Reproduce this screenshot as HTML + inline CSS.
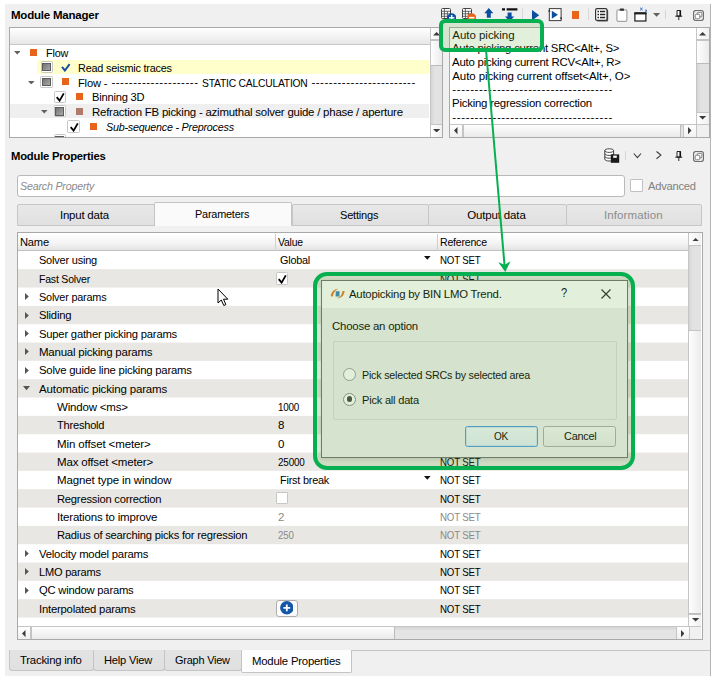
<!DOCTYPE html>
<html><head><meta charset="utf-8"><title>Module Manager</title>
<style>
html,body{margin:0;padding:0;background:#fff;}
#root{position:relative;width:717px;height:681px;overflow:hidden;background:#fff;font-family:'Liberation Sans', sans-serif;}
#root div,#root span,#root svg{position:absolute;box-sizing:border-box;}
#root span{white-space:pre;line-height:14px;}
</style></head><body><div id="root">
<div style="left:5px;top:4px;width:706px;height:672px;background:#f0f0f0;"></div>
<div style="left:710px;top:4px;width:1px;height:672px;background:#b4b4b4;"></div>
<span style="left:11px;top:8.09px;font-size:11.5px;font-weight:bold;color:#000;letter-spacing:-0.210px;transform:scaleX(1.0000);transform-origin:0 50%;">Module Manager</span>
<svg style="left:441px;top:7.5px;" width="10" height="11" viewBox="0 0 10 11"><rect x="0.5" y="0.5" width="9" height="10" rx="1" fill="#fff" stroke="#444" stroke-width="1"/><path d="M0.5 3.3H9.5M0.5 5.8H9.5M0.5 8.3H9.5M3.4 0.5V10.5M6.4 3.3V10.5" stroke="#444" stroke-width="0.8"/></svg>
<svg style="left:446.8px;top:12.6px;" width="9.4" height="9.4" viewBox="0 0 9.4 9.4"><circle cx="4.7" cy="4.7" r="4.5" fill="#0b4ea0"/><path d="M4.7 2V7.4M2 4.7H7.4" stroke="#fff" stroke-width="1.5"/></svg>
<svg style="left:462px;top:7.5px;" width="10" height="11" viewBox="0 0 10 11"><rect x="0.5" y="0.5" width="9" height="10" rx="1" fill="#fff" stroke="#444" stroke-width="1"/><path d="M0.5 3.3H9.5M0.5 5.8H9.5M0.5 8.3H9.5M3.4 0.5V10.5M6.4 3.3V10.5" stroke="#444" stroke-width="0.8"/></svg>
<svg style="left:466.9px;top:12.6px;" width="9.4" height="9.4" viewBox="0 0 9.4 9.4"><circle cx="4.7" cy="4.7" r="4.5" fill="#e8641b"/><path d="M2 4.7H7.4" stroke="#fff" stroke-width="1.6"/></svg>
<svg style="left:484.1px;top:7.8px;" width="10" height="10" viewBox="0 0 10 10"><path d="M4.8 0L9.3 5.2H6.8V9.8H2.8V5.2H0.3Z" fill="#0b4ea0"/></svg>
<svg style="left:502px;top:7.6px;" width="16" height="14" viewBox="0 0 16 14"><path d="M0 0.2H3V2.4H0ZM4.6 0.2H15.4V2.4H4.6Z" fill="#111"/><path d="M5.6 4.4H9.6V8.6H12.2L7.6 13.6L3 8.6H5.6Z" fill="#0b4ea0"/></svg>
<div style="left:522.3px;top:8px;width:1px;height:12px;background:#d9d9d9;"></div>
<svg style="left:532px;top:9.5px;" width="7.5" height="10.4" viewBox="0 0 7.5 10.4"><path d="M0 0L7.2 5.2L0 10.4Z" fill="#0b4ea0"/></svg>
<svg style="left:547.9px;top:8px;" width="14.5" height="13.5" viewBox="0 0 14.5 13.5"><rect x="1.3" y="0.6" width="11.8" height="12" fill="#fff" stroke="#3c3c3c" stroke-width="1"/><path d="M0 3.6L1.3 1.6L2.6 3.6Z M11.8 9.6L13.1 11.6L14.4 9.6Z" fill="#222"/><path d="M3.8 2.8L9.9 6.8L3.8 10.8Z" fill="#0b4ea0"/></svg>
<div style="left:571.6px;top:11.3px;width:7.5px;height:7.5px;background:#e8641b;"></div>
<div style="left:588px;top:8px;width:1px;height:12px;background:#d9d9d9;"></div>
<svg style="left:594.5px;top:8px;" width="14" height="14" viewBox="0 0 14 14"><rect x="1.6" y="1.6" width="11.6" height="12" rx="1.5" fill="#555"/><rect x="0.6" y="0.6" width="11.4" height="11.8" rx="1.5" fill="#fff" stroke="#333" stroke-width="1.2"/><path d="M2.5 3.4H4M5 3.4H10.2M2.5 6.4H4M5 6.4H10.2M2.5 9.4H4M5 9.4H10.2" stroke="#222" stroke-width="1.5"/></svg>
<svg style="left:615.5px;top:7.6px;" width="12" height="14" viewBox="0 0 12 14"><rect x="0.9" y="1.9" width="10" height="11.4" rx="1.3" fill="#fff" stroke="#a4a4a4" stroke-width="1.2"/><rect x="3.8" y="0.4" width="4.2" height="2.4" rx="0.6" fill="#333"/></svg>
<svg style="left:633.5px;top:7px;" width="14" height="15" viewBox="0 0 14 15"><rect x="0.9" y="6.4" width="11" height="7.6" fill="#fff" stroke="#1c1c1c" stroke-width="1.2"/><rect x="0.3" y="5.2" width="12.2" height="2.2" fill="#1c1c1c"/><path d="M6.2 0.8L8.6 3.2M8.6 0.8L6.2 3.2M11.2 2.8L13 4.6M13 2.8L11.2 4.6" stroke="#2a63c8" stroke-width="1"/></svg>
<svg style="left:653.4px;top:13px;" width="7.2" height="3.8" viewBox="0 0 7.2 3.8"><path d="M0 0H7.2L3.6 3.7Z" fill="#606060"/></svg>
<div style="left:665.2px;top:10.4px;width:1px;height:9px;background:#d6d6d6;"></div>
<svg style="left:674.6px;top:10.2px;" width="8" height="10.5" viewBox="0 0 8 10.5"><path d="M2 0.5H5.6V6H2Z" fill="#f4f4f4" stroke="#111" stroke-width="0.9"/><path d="M5.2 0.5V6" stroke="#111" stroke-width="1.5"/><path d="M0.4 6.2H7.2" stroke="#111" stroke-width="1"/><path d="M3.8 6.5V10.1" stroke="#111" stroke-width="0.9"/></svg>
<svg style="left:693.2px;top:10px;" width="11" height="11" viewBox="0 0 11 11"><rect x="0.5" y="0.5" width="10" height="10" rx="2.4" fill="#ececec" stroke="#707070" stroke-width="1.2"/><rect x="4.3" y="2.3" width="4.6" height="4.6" rx="1.2" fill="#f4f4f4" stroke="#7a7a7a" stroke-width="1"/><rect x="2.2" y="4.2" width="4.6" height="4.6" rx="1.4" fill="#fff" stroke="#7a7a7a" stroke-width="1"/></svg>
<div style="left:9px;top:27px;width:434px;height:110.5px;background:#fff;border:1px solid #a9a9a9;"></div>
<div style="left:10px;top:28px;width:420px;height:16.5px;background:linear-gradient(#fff,#f1f1f1 60%,#e6e6e6);border-bottom:1px solid #c8c8c8;"></div>
<div style="left:10px;top:45px;width:420px;height:91.5px;overflow:hidden;">
<div style="left:27px;top:15px;width:392.3px;height:14.2px;background:#ffffcc;"></div>
<div style="left:0px;top:58.60000000000001px;width:419.3px;height:14.6px;background:#efefef;"></div>
<svg style="left:3.7px;top:6.200000000000001px;" width="6.6" height="3.6" viewBox="0 0 6.6 3.6"><path d="M0 0H6.6L3.3 3.5Z" fill="#606060"/></svg>
<div style="left:20px;top:4.000000000000002px;width:7px;height:7px;background:#e8641b;"></div>
<span style="left:36px;top:1.29px;font-size:11.5px;color:#000;letter-spacing:-0.220px;transform:scaleX(0.9441);transform-origin:0 50%;">Flow</span>
<div style="left:30.5px;top:16.000000000000004px;width:12.5px;height:12.3px;background:#fff;border:1px solid #c6c6c6;border-radius:1.5px;"></div>
<div style="left:32.4px;top:17.800000000000004px;width:8.8px;height:8.7px;background:linear-gradient(135deg,#747474,#a8a8a8);border:1px solid #5c5c5c;"></div>
<svg style="left:51px;top:17.700000000000003px;" width="10" height="9" viewBox="0 0 10 9"><path d="M1 3.9L3.9 7.5L8.6 1.2" fill="none" stroke="#1b4f9c" stroke-width="2"/></svg>
<span style="left:68.3px;top:15.89px;font-size:11.5px;color:#000;letter-spacing:-0.220px;transform:scaleX(0.9439);transform-origin:0 50%;">Read seismic traces</span>
<svg style="left:18.099999999999998px;top:35.6px;" width="6.6" height="3.6" viewBox="0 0 6.6 3.6"><path d="M0 0H6.6L3.3 3.5Z" fill="#606060"/></svg>
<div style="left:30.0px;top:30.8px;width:12.5px;height:12.3px;background:#fff;border:1px solid #c6c6c6;border-radius:1.5px;"></div>
<div style="left:31.9px;top:32.6px;width:8.8px;height:8.7px;background:linear-gradient(135deg,#747474,#a8a8a8);border:1px solid #5c5c5c;"></div>
<div style="left:52.3px;top:33.4px;width:7px;height:7px;background:#e8641b;"></div>
<span style="left:68.3px;top:30.69px;font-size:11.5px;color:#000;letter-spacing:-0.220px;transform:scaleX(0.9731);transform-origin:0 50%;">Flow -</span>
<span style="left:101.4px;top:29.89px;font-size:11.5px;color:#000;letter-spacing:0.527px;">--------------------</span>
<span style="left:191.7px;top:30.69px;font-size:11.5px;color:#000;letter-spacing:-0.220px;transform:scaleX(0.8943);transform-origin:0 50%;">STATIC CALCULATION</span>
<span style="left:301.4px;top:29.89px;font-size:11.5px;color:#000;letter-spacing:0.521px;">------------------------</span>
<div style="left:43.5px;top:45.5px;width:12.6px;height:12.3px;background:#fff;border:1px solid #c6c6c6;border-radius:1.5px;"></div>
<svg style="left:45px;top:46.7px;" width="11" height="10" viewBox="0 0 11 10"><path d="M1.7 5.1L4.6 8.6L8.8 1.4" fill="none" stroke="#000" stroke-width="1.8"/></svg>
<div style="left:66px;top:48.1px;width:7px;height:7px;background:#e8641b;"></div>
<span style="left:82.4px;top:45.39px;font-size:11.5px;color:#000;letter-spacing:-0.220px;transform:scaleX(0.9689);transform-origin:0 50%;">Binning 3D</span>
<svg style="left:31.400000000000002px;top:65.0px;" width="6.6" height="3.6" viewBox="0 0 6.6 3.6"><path d="M0 0H6.6L3.3 3.5Z" fill="#606060"/></svg>
<div style="left:43.5px;top:60.2px;width:12.5px;height:12.3px;background:#fff;border:1px solid #c6c6c6;border-radius:1.5px;"></div>
<div style="left:45.4px;top:62.00000000000001px;width:8.8px;height:8.7px;background:linear-gradient(135deg,#747474,#a8a8a8);border:1px solid #5c5c5c;"></div>
<div style="left:66px;top:62.800000000000004px;width:7px;height:7px;background:#b07a68;"></div>
<span style="left:82.4px;top:60.09px;font-size:11.5px;color:#000;letter-spacing:-0.220px;transform:scaleX(0.9930);transform-origin:0 50%;">Refraction FB picking - azimuthal solver guide / phase / aperture</span>
<div style="left:57.3px;top:75.3px;width:12.6px;height:12.3px;background:#fff;border:1px solid #c6c6c6;border-radius:1.5px;"></div>
<svg style="left:58.8px;top:76.5px;" width="11" height="10" viewBox="0 0 11 10"><path d="M1.7 5.1L4.6 8.6L8.8 1.4" fill="none" stroke="#000" stroke-width="1.8"/></svg>
<div style="left:79.7px;top:77.9px;width:7px;height:7px;background:#e8641b;"></div>
<span style="left:96px;top:75.19px;font-size:11.5px;font-style:italic;color:#000;letter-spacing:-0.220px;transform:scaleX(0.9324);transform-origin:0 50%;">Sub-sequence - Preprocess</span>
<div style="left:43.5px;top:89.10000000000001px;width:12.5px;height:12.3px;background:#fff;border:1px solid #c6c6c6;border-radius:1.5px;"></div>
<div style="left:45.4px;top:90.9px;width:8.8px;height:8.7px;background:linear-gradient(135deg,#747474,#a8a8a8);border:1px solid #5c5c5c;"></div>
</div>
<div style="left:430px;top:27.5px;width:12.199999999999989px;height:109.5px;background:linear-gradient(to right,#d4d4d4,#e2e2e2 30%,#e2e2e2);border-left:1px solid #c6c6c6;"></div>
<div style="left:430px;top:27.5px;width:12.199999999999989px;height:12.8px;background:linear-gradient(to right,#fff,#f0f0f0);border-left:1px solid #c6c6c6;border-bottom:1px solid #c4c4c4;"></div>
<svg style="left:432.8px;top:32.0px;" width="7.2" height="3.5" viewBox="0 0 7.2 3.5"><path d="M0 3.5H7.2L3.6 0Z" fill="#3c3c3c"/></svg>
<div style="left:430px;top:124.2px;width:12.199999999999989px;height:12.8px;background:linear-gradient(to right,#fff,#f0f0f0);border-left:1px solid #c6c6c6;border-top:1px solid #c4c4c4;"></div>
<svg style="left:432.8px;top:128.9px;" width="7.2" height="3.5" viewBox="0 0 7.2 3.5"><path d="M0 0H7.2L3.6 3.5Z" fill="#3c3c3c"/></svg>
<div style="left:430px;top:40.3px;width:12.199999999999989px;height:25.700000000000003px;background:linear-gradient(to right,#fefefe,#ebebeb);border-left:1px solid #c6c6c6;border-top:1px solid #c4c4c4;border-bottom:1px solid #bcbcbc;"></div>
<div style="left:449px;top:27px;width:260.5px;height:110.5px;background:#fff;border:1px solid #a9a9a9;"></div>
<span style="left:452.3px;top:27.79px;font-size:11.5px;color:#000;letter-spacing:-0.032px;transform:scaleX(1.0000);transform-origin:0 50%;">Auto picking</span>
<span style="left:452.3px;top:41.49px;font-size:11.5px;color:#000;letter-spacing:-0.220px;transform:scaleX(0.9864);transform-origin:0 50%;">Auto picking current SRC&lt;Alt+, S&gt;</span>
<span style="left:452.3px;top:55.19px;font-size:11.5px;color:#000;letter-spacing:-0.220px;transform:scaleX(0.9922);transform-origin:0 50%;">Auto picking current RCV&lt;Alt+, R&gt;</span>
<span style="left:452.3px;top:68.89px;font-size:11.5px;color:#000;letter-spacing:-0.102px;transform:scaleX(1.0000);transform-origin:0 50%;">Auto picking current offset&lt;Alt+, O&gt;</span>
<span style="left:452.3px;top:82.09px;font-size:11.5px;color:#000;letter-spacing:0.632px;">------------------------------------</span>
<span style="left:452.3px;top:96.29px;font-size:11.5px;color:#000;letter-spacing:-0.220px;transform:scaleX(0.9901);transform-origin:0 50%;">Picking regression correction</span>
<span style="left:452.3px;top:109.79px;font-size:11.5px;color:#000;letter-spacing:0.632px;">------------------------------------</span>
<div style="left:696px;top:27.5px;width:13.299999999999955px;height:96.8px;background:linear-gradient(to right,#d4d4d4,#e2e2e2 30%,#e2e2e2);border-left:1px solid #c6c6c6;"></div>
<div style="left:696px;top:27.5px;width:13.299999999999955px;height:12.8px;background:linear-gradient(to right,#fff,#f0f0f0);border-left:1px solid #c6c6c6;border-bottom:1px solid #c4c4c4;"></div>
<svg style="left:699.3499999999999px;top:32.0px;" width="7.2" height="3.5" viewBox="0 0 7.2 3.5"><path d="M0 3.5H7.2L3.6 0Z" fill="#3c3c3c"/></svg>
<div style="left:696px;top:111.5px;width:13.299999999999955px;height:12.8px;background:linear-gradient(to right,#fff,#f0f0f0);border-left:1px solid #c6c6c6;border-top:1px solid #c4c4c4;"></div>
<svg style="left:699.3499999999999px;top:116.19999999999999px;" width="7.2" height="3.5" viewBox="0 0 7.2 3.5"><path d="M0 0H7.2L3.6 3.5Z" fill="#3c3c3c"/></svg>
<div style="left:696px;top:40.3px;width:13.299999999999955px;height:24.10000000000001px;background:linear-gradient(to right,#fefefe,#ebebeb);border-left:1px solid #c6c6c6;border-top:1px solid #c4c4c4;border-bottom:1px solid #bcbcbc;"></div>
<div style="left:450px;top:124.3px;width:246px;height:12.700000000000003px;background:linear-gradient(#d4d4d4,#e4e4e4 30%,#e4e4e4);border-top:1px solid #c6c6c6;"></div>
<div style="left:450px;top:124.3px;width:13px;height:12.700000000000003px;background:linear-gradient(#fff,#f0f0f0);border-top:1px solid #c6c6c6;border-right:1px solid #c4c4c4;"></div>
<svg style="left:454.3px;top:127.35000000000002px;" width="3.5" height="7.2" viewBox="0 0 3.5 7.2"><path d="M3.5 0V7.2L0 3.6Z" fill="#3c3c3c"/></svg>
<div style="left:683.2px;top:124.3px;width:12.8px;height:12.700000000000003px;background:linear-gradient(#fff,#f0f0f0);border-top:1px solid #c6c6c6;border-left:1px solid #c4c4c4;"></div>
<svg style="left:688.0999999999999px;top:127.35000000000002px;" width="3.5" height="7.2" viewBox="0 0 3.5 7.2"><path d="M0 0V7.2L3.5 3.6Z" fill="#3c3c3c"/></svg>
<div style="left:462.5px;top:124.3px;width:218.5px;height:12.700000000000003px;background:linear-gradient(#fefefe,#e9e9e9);border-top:1px solid #c6c6c6;border-right:1px solid #bcbcbc;border-left:1px solid #c4c4c4;"></div>
<div style="left:696px;top:124.3px;width:13.3px;height:12.7px;background:#f0f0f0;border-left:1px solid #c6c6c6;border-top:1px solid #c6c6c6;"></div>
<span style="left:11.3px;top:149.09px;font-size:11.5px;font-weight:bold;color:#000;letter-spacing:-0.220px;transform:scaleX(0.9793);transform-origin:0 50%;">Module Properties</span>
<svg style="left:604.2px;top:147.6px;" width="16" height="15.5" viewBox="0 0 16 15.5"><path d="M0.8 2.6C0.8 0.2 9.6 0.2 9.6 2.6V11.2C9.6 13.6 0.8 13.6 0.8 11.2Z" fill="#fff" stroke="#444" stroke-width="1"/><path d="M0.8 2.6C0.8 5 9.6 5 9.6 2.6M0.8 5.6C0.8 8 9.6 8 9.6 5.6M0.8 8.4C0.8 10.8 9.6 10.8 9.6 8.4" fill="none" stroke="#444" stroke-width="1"/><rect x="6.8" y="6.4" width="8.4" height="8.4" fill="#1a1a1a"/><rect x="9.2" y="7.6" width="3.6" height="2.2" fill="#fff"/></svg>
<div style="left:625.2px;top:151px;width:1px;height:8.5px;background:#d6d6d6;"></div>
<svg style="left:633.3px;top:153px;" width="9" height="6" viewBox="0 0 9 6"><path d="M0.8 0.5L4.4 4.6L8 0.5" fill="none" stroke="#3c3c3c" stroke-width="1.1"/></svg>
<svg style="left:655.7px;top:151.4px;" width="6" height="9" viewBox="0 0 6 9"><path d="M0.5 0.5L4.9 4.1L0.5 7.7" fill="none" stroke="#3c3c3c" stroke-width="1.1"/></svg>
<svg style="left:674.6px;top:150.6px;" width="8" height="10.5" viewBox="0 0 8 10.5"><path d="M2 0.5H5.6V6H2Z" fill="#f4f4f4" stroke="#111" stroke-width="0.9"/><path d="M5.2 0.5V6" stroke="#111" stroke-width="1.5"/><path d="M0.4 6.2H7.2" stroke="#111" stroke-width="1"/><path d="M3.8 6.5V10.1" stroke="#111" stroke-width="0.9"/></svg>
<svg style="left:693.2px;top:150.8px;" width="11" height="11" viewBox="0 0 11 11"><rect x="0.5" y="0.5" width="10" height="10" rx="2.4" fill="#ececec" stroke="#707070" stroke-width="1.2"/><rect x="4.3" y="2.3" width="4.6" height="4.6" rx="1.2" fill="#f4f4f4" stroke="#7a7a7a" stroke-width="1"/><rect x="2.2" y="4.2" width="4.6" height="4.6" rx="1.4" fill="#fff" stroke="#7a7a7a" stroke-width="1"/></svg>
<div style="left:17px;top:175px;width:608px;height:22px;background:#fff;border:1px solid #b9b9b9;border-radius:3px;"></div>
<span style="left:20px;top:178.79px;font-size:11.5px;font-style:italic;color:#8a8a8a;letter-spacing:-0.220px;transform:scaleX(0.9297);transform-origin:0 50%;">Search Property</span>
<div style="left:630.2px;top:179.2px;width:12.7px;height:12.4px;background:#fff;border:1px solid #c0c0c0;border-radius:1px;"></div>
<span style="left:648.3px;top:179.09px;font-size:11.5px;color:#808080;letter-spacing:-0.220px;transform:scaleX(0.9674);transform-origin:0 50%;">Advanced</span>
<div style="left:17px;top:204px;width:137.7px;height:21.5px;background:linear-gradient(#e8e8e8,#e0e0e0);border:1px solid #c6c6c6;border-radius:2px 2px 0 0;"></div>
<span style="left:60.3px;top:208.49px;font-size:11.5px;color:#000;letter-spacing:-0.220px;transform:scaleX(0.9964);transform-origin:0 50%;">Input data</span>
<div style="left:291.5px;top:204px;width:137.5px;height:21.5px;background:linear-gradient(#e8e8e8,#e0e0e0);border:1px solid #c6c6c6;border-radius:2px 2px 0 0;"></div>
<span style="left:340px;top:208.49px;font-size:11.5px;color:#000;letter-spacing:-0.220px;transform:scaleX(0.9620);transform-origin:0 50%;">Settings</span>
<div style="left:428px;top:204px;width:138.5px;height:21.5px;background:linear-gradient(#e8e8e8,#e0e0e0);border:1px solid #c6c6c6;border-radius:2px 2px 0 0;"></div>
<span style="left:467.2px;top:208.49px;font-size:11.5px;color:#000;letter-spacing:-0.151px;transform:scaleX(1.0000);transform-origin:0 50%;">Output data</span>
<div style="left:565.5px;top:204px;width:136.5px;height:21.5px;background:linear-gradient(#e8e8e8,#e0e0e0);border:1px solid #c6c6c6;border-radius:2px 2px 0 0;"></div>
<span style="left:604px;top:208.49px;font-size:11.5px;color:#8c8c8c;letter-spacing:0.107px;">Information</span>
<div style="left:153.7px;top:201.7px;width:138.8px;height:24.3px;background:#fafafa;border:1px solid #c4c4c4;border-bottom:none;border-radius:2px 2px 0 0;"></div>
<span style="left:195.2px;top:207.39px;font-size:11.5px;color:#000;letter-spacing:-0.220px;transform:scaleX(0.9468);transform-origin:0 50%;">Parameters</span>
<div style="left:17px;top:232px;width:685.5px;height:407.5px;background:#fff;border:1px solid #a9a9a9;"></div>
<div style="left:18px;top:233.5px;width:671px;height:17px;background:linear-gradient(#fff,#f4f4f4 55%,#e4e4e4);border-bottom:1px solid #c0c0c0;"></div>
<div style="left:274.5px;top:233.5px;width:1px;height:17px;background:#d0d0d0;"></div>
<div style="left:437px;top:233.5px;width:1px;height:17px;background:#d0d0d0;"></div>
<span style="left:20px;top:235.09px;font-size:11.5px;color:#000;letter-spacing:-0.220px;transform:scaleX(0.9691);transform-origin:0 50%;">Name</span>
<span style="left:277.5px;top:235.09px;font-size:11.5px;color:#000;letter-spacing:-0.220px;transform:scaleX(0.9067);transform-origin:0 50%;">Value</span>
<span style="left:440px;top:235.09px;font-size:11.5px;color:#000;letter-spacing:-0.220px;transform:scaleX(0.9161);transform-origin:0 50%;">Reference</span>
<span style="left:39.1px;top:253.42px;font-size:11.5px;color:#000;letter-spacing:-0.220px;transform:scaleX(0.9560);transform-origin:0 50%;">Solver using</span>
<span style="left:279.8px;top:253.42px;font-size:11.5px;color:#000;letter-spacing:-0.220px;transform:scaleX(0.9393);transform-origin:0 50%;">Global</span>
<svg style="left:424px;top:255.73649999999998px;" width="6.6" height="3.8" viewBox="0 0 6.6 3.8"><path d="M0 0H6.6L3.3 3.7Z" fill="#111"/></svg>
<span style="left:440.1px;top:253.42px;font-size:11.5px;color:#000;letter-spacing:-0.220px;transform:scaleX(0.8423);transform-origin:0 50%;">NOT SET</span>
<svg style="left:18px;top:0px;" width="671" height="681" viewBox="0 0 671 681"><rect x="0" y="269.20" width="671" height="18.333" fill="#e9e7e3"/></svg>
<span style="left:39.1px;top:271.76px;font-size:11.5px;color:#000;letter-spacing:-0.220px;transform:scaleX(0.9147);transform-origin:0 50%;">Fast Solver</span>
<div style="left:275.8px;top:272.36949999999996px;width:12.6px;height:12.3px;background:#fff;border:1px solid #c6c6c6;border-radius:1.5px;"></div>
<svg style="left:277.3px;top:273.56949999999995px;" width="11" height="10" viewBox="0 0 11 10"><path d="M1.7 5.1L4.6 8.6L8.8 1.4" fill="none" stroke="#000" stroke-width="1.8"/></svg>
<span style="left:440.1px;top:271.76px;font-size:11.5px;color:#000;letter-spacing:-0.220px;transform:scaleX(0.8423);transform-origin:0 50%;">NOT SET</span>
<svg style="left:24.5px;top:293.2025px;" width="4" height="7" viewBox="0 0 4 7"><path d="M0 0V7L3.8 3.5Z" fill="#555"/></svg>
<span style="left:39.1px;top:290.09px;font-size:11.5px;color:#000;letter-spacing:-0.220px;transform:scaleX(0.9454);transform-origin:0 50%;">Solver params</span>
<span style="left:440.1px;top:290.09px;font-size:11.5px;color:#000;letter-spacing:-0.220px;transform:scaleX(0.8423);transform-origin:0 50%;">NOT SET</span>
<svg style="left:18px;top:0px;" width="671" height="681" viewBox="0 0 671 681"><rect x="0" y="305.87" width="671" height="18.333" fill="#e9e7e3"/></svg>
<svg style="left:24.5px;top:311.5355px;" width="4" height="7" viewBox="0 0 4 7"><path d="M0 0V7L3.8 3.5Z" fill="#555"/></svg>
<span style="left:39.1px;top:308.42px;font-size:11.5px;color:#000;letter-spacing:-0.220px;transform:scaleX(0.9786);transform-origin:0 50%;">Sliding</span>
<span style="left:440.1px;top:308.42px;font-size:11.5px;color:#000;letter-spacing:-0.220px;transform:scaleX(0.8423);transform-origin:0 50%;">NOT SET</span>
<svg style="left:24.5px;top:329.8685px;" width="4" height="7" viewBox="0 0 4 7"><path d="M0 0V7L3.8 3.5Z" fill="#555"/></svg>
<span style="left:39.1px;top:326.75px;font-size:11.5px;color:#000;letter-spacing:-0.220px;transform:scaleX(0.9780);transform-origin:0 50%;">Super gather picking params</span>
<span style="left:440.1px;top:326.75px;font-size:11.5px;color:#000;letter-spacing:-0.220px;transform:scaleX(0.8423);transform-origin:0 50%;">NOT SET</span>
<svg style="left:18px;top:0px;" width="671" height="681" viewBox="0 0 671 681"><rect x="0" y="342.53" width="671" height="18.333" fill="#e9e7e3"/></svg>
<svg style="left:24.5px;top:348.20149999999995px;" width="4" height="7" viewBox="0 0 4 7"><path d="M0 0V7L3.8 3.5Z" fill="#555"/></svg>
<span style="left:39.1px;top:345.09px;font-size:11.5px;color:#000;letter-spacing:-0.220px;transform:scaleX(0.9968);transform-origin:0 50%;">Manual picking params</span>
<span style="left:440.1px;top:345.09px;font-size:11.5px;color:#000;letter-spacing:-0.220px;transform:scaleX(0.8423);transform-origin:0 50%;">NOT SET</span>
<svg style="left:24.5px;top:366.5345px;" width="4" height="7" viewBox="0 0 4 7"><path d="M0 0V7L3.8 3.5Z" fill="#555"/></svg>
<span style="left:39.1px;top:363.42px;font-size:11.5px;color:#000;letter-spacing:-0.220px;transform:scaleX(0.9862);transform-origin:0 50%;">Solve guide line picking params</span>
<span style="left:440.1px;top:363.42px;font-size:11.5px;color:#000;letter-spacing:-0.220px;transform:scaleX(0.8423);transform-origin:0 50%;">NOT SET</span>
<svg style="left:18px;top:0px;" width="671" height="681" viewBox="0 0 671 681"><rect x="0" y="379.20" width="671" height="18.333" fill="#e9e7e3"/></svg>
<svg style="left:23px;top:385.8675px;" width="7" height="5" viewBox="0 0 7 5"><path d="M0 0H7L3.5 4.2Z" fill="#555"/></svg>
<span style="left:39.1px;top:381.75px;font-size:11.5px;color:#000;letter-spacing:-0.151px;transform:scaleX(1.0000);transform-origin:0 50%;">Automatic picking params</span>
<span style="left:440.1px;top:381.75px;font-size:11.5px;color:#000;letter-spacing:-0.220px;transform:scaleX(0.8423);transform-origin:0 50%;">NOT SET</span>
<span style="left:57px;top:400.09px;font-size:11.5px;color:#000;letter-spacing:-0.186px;transform:scaleX(1.0000);transform-origin:0 50%;">Window &lt;ms&gt;</span>
<span style="left:278px;top:400.09px;font-size:11.5px;color:#000;letter-spacing:-0.220px;transform:scaleX(0.8543);transform-origin:0 50%;">1000</span>
<span style="left:440.1px;top:400.09px;font-size:11.5px;color:#000;letter-spacing:-0.220px;transform:scaleX(0.8423);transform-origin:0 50%;">NOT SET</span>
<svg style="left:18px;top:0px;" width="671" height="681" viewBox="0 0 671 681"><rect x="0" y="415.87" width="671" height="18.333" fill="#e9e7e3"/></svg>
<span style="left:57px;top:418.42px;font-size:11.5px;color:#000;letter-spacing:-0.220px;transform:scaleX(0.9619);transform-origin:0 50%;">Threshold</span>
<span style="left:278px;top:418.42px;font-size:11.5px;color:#000;">8</span>
<span style="left:440.1px;top:418.42px;font-size:11.5px;color:#000;letter-spacing:-0.220px;transform:scaleX(0.8423);transform-origin:0 50%;">NOT SET</span>
<span style="left:57px;top:436.75px;font-size:11.5px;color:#000;letter-spacing:-0.116px;transform:scaleX(1.0000);transform-origin:0 50%;">Min offset &lt;meter&gt;</span>
<span style="left:278px;top:436.75px;font-size:11.5px;color:#000;">0</span>
<span style="left:440.1px;top:436.75px;font-size:11.5px;color:#000;letter-spacing:-0.220px;transform:scaleX(0.8423);transform-origin:0 50%;">NOT SET</span>
<svg style="left:18px;top:0px;" width="671" height="681" viewBox="0 0 671 681"><rect x="0" y="452.53" width="671" height="18.333" fill="#e9e7e3"/></svg>
<span style="left:57px;top:455.09px;font-size:11.5px;color:#000;letter-spacing:-0.163px;transform:scaleX(1.0000);transform-origin:0 50%;">Max offset &lt;meter&gt;</span>
<span style="left:278px;top:455.09px;font-size:11.5px;color:#000;letter-spacing:-0.220px;transform:scaleX(0.8616);transform-origin:0 50%;">25000</span>
<span style="left:440.1px;top:455.09px;font-size:11.5px;color:#000;letter-spacing:-0.220px;transform:scaleX(0.8423);transform-origin:0 50%;">NOT SET</span>
<span style="left:57px;top:473.42px;font-size:11.5px;color:#000;letter-spacing:-0.124px;transform:scaleX(1.0000);transform-origin:0 50%;">Magnet type in window</span>
<span style="left:279.8px;top:473.42px;font-size:11.5px;color:#000;letter-spacing:-0.220px;transform:scaleX(0.9457);transform-origin:0 50%;">First break</span>
<svg style="left:424px;top:475.73249999999996px;" width="6.6" height="3.8" viewBox="0 0 6.6 3.8"><path d="M0 0H6.6L3.3 3.7Z" fill="#111"/></svg>
<span style="left:440.1px;top:473.42px;font-size:11.5px;color:#000;letter-spacing:-0.220px;transform:scaleX(0.8423);transform-origin:0 50%;">NOT SET</span>
<svg style="left:18px;top:0px;" width="671" height="681" viewBox="0 0 671 681"><rect x="0" y="489.20" width="671" height="18.333" fill="#e9e7e3"/></svg>
<span style="left:57px;top:491.75px;font-size:11.5px;color:#000;letter-spacing:-0.220px;transform:scaleX(0.9725);transform-origin:0 50%;">Regression correction</span>
<div style="left:275.8px;top:492.2654999999999px;width:12.5px;height:12px;background:#fff;border:1px solid #c6c6c6;border-radius:1px;"></div>
<span style="left:440.1px;top:491.75px;font-size:11.5px;color:#000;letter-spacing:-0.220px;transform:scaleX(0.8423);transform-origin:0 50%;">NOT SET</span>
<span style="left:57px;top:510.08px;font-size:11.5px;color:#000;letter-spacing:-0.184px;transform:scaleX(1.0000);transform-origin:0 50%;">Iterations to improve</span>
<span style="left:278px;top:510.08px;font-size:11.5px;color:#8a8a8a;">2</span>
<span style="left:440.1px;top:510.08px;font-size:11.5px;color:#8a8a8a;letter-spacing:-0.220px;transform:scaleX(0.8423);transform-origin:0 50%;">NOT SET</span>
<svg style="left:18px;top:0px;" width="671" height="681" viewBox="0 0 671 681"><rect x="0" y="525.87" width="671" height="18.333" fill="#e9e7e3"/></svg>
<span style="left:57px;top:528.42px;font-size:11.5px;color:#000;letter-spacing:-0.220px;transform:scaleX(0.9721);transform-origin:0 50%;">Radius of searching picks for regression</span>
<span style="left:278px;top:528.42px;font-size:11.5px;color:#8a8a8a;letter-spacing:-0.220px;transform:scaleX(0.8428);transform-origin:0 50%;">250</span>
<span style="left:440.1px;top:528.42px;font-size:11.5px;color:#8a8a8a;letter-spacing:-0.220px;transform:scaleX(0.8423);transform-origin:0 50%;">NOT SET</span>
<svg style="left:24.5px;top:549.8645px;" width="4" height="7" viewBox="0 0 4 7"><path d="M0 0V7L3.8 3.5Z" fill="#555"/></svg>
<span style="left:39.1px;top:546.75px;font-size:11.5px;color:#000;letter-spacing:-0.220px;transform:scaleX(0.9829);transform-origin:0 50%;">Velocity model params</span>
<span style="left:440.1px;top:546.75px;font-size:11.5px;color:#000;letter-spacing:-0.220px;transform:scaleX(0.8423);transform-origin:0 50%;">NOT SET</span>
<svg style="left:18px;top:0px;" width="671" height="681" viewBox="0 0 671 681"><rect x="0" y="562.53" width="671" height="18.333" fill="#e9e7e3"/></svg>
<svg style="left:24.5px;top:568.1975px;" width="4" height="7" viewBox="0 0 4 7"><path d="M0 0V7L3.8 3.5Z" fill="#555"/></svg>
<span style="left:39.1px;top:565.08px;font-size:11.5px;color:#000;letter-spacing:-0.220px;transform:scaleX(0.9599);transform-origin:0 50%;">LMO params</span>
<span style="left:440.1px;top:565.08px;font-size:11.5px;color:#000;letter-spacing:-0.220px;transform:scaleX(0.8423);transform-origin:0 50%;">NOT SET</span>
<svg style="left:24.5px;top:586.5305000000001px;" width="4" height="7" viewBox="0 0 4 7"><path d="M0 0V7L3.8 3.5Z" fill="#555"/></svg>
<span style="left:39.1px;top:583.42px;font-size:11.5px;color:#000;letter-spacing:-0.220px;transform:scaleX(0.9758);transform-origin:0 50%;">QC window params</span>
<span style="left:440.1px;top:583.42px;font-size:11.5px;color:#000;letter-spacing:-0.220px;transform:scaleX(0.8423);transform-origin:0 50%;">NOT SET</span>
<svg style="left:18px;top:0px;" width="671" height="681" viewBox="0 0 671 681"><rect x="0" y="599.20" width="671" height="18.333" fill="#e9e7e3"/></svg>
<span style="left:39.1px;top:601.75px;font-size:11.5px;color:#000;letter-spacing:-0.220px;transform:scaleX(0.9834);transform-origin:0 50%;">Interpolated params</span>
<div style="left:275.8px;top:599.7635px;width:22.4px;height:17.1px;background:#fdfdfd;border:1px solid #adadad;border-radius:3px;"></div>
<svg style="left:279.9px;top:601.4635000000001px;" width="13.6" height="13.6" viewBox="0 0 13.6 13.6"><circle cx="6.8" cy="6.8" r="6.7" fill="#1457a8"/><path d="M6.8 3.4V10.2M3.4 6.8H10.2" stroke="#fff" stroke-width="1.8"/></svg>
<span style="left:440.1px;top:601.75px;font-size:11.5px;color:#000;letter-spacing:-0.220px;transform:scaleX(0.8423);transform-origin:0 50%;">NOT SET</span>
<div style="left:688.3px;top:233px;width:13.200000000000045px;height:393.29999999999995px;background:linear-gradient(to right,#d4d4d4,#e2e2e2 30%,#e2e2e2);border-left:1px solid #c6c6c6;"></div>
<div style="left:688.3px;top:233px;width:13.200000000000045px;height:12.8px;background:linear-gradient(to right,#fff,#f0f0f0);border-left:1px solid #c6c6c6;border-bottom:1px solid #c4c4c4;"></div>
<svg style="left:691.5999999999999px;top:237.5px;" width="7.2" height="3.5" viewBox="0 0 7.2 3.5"><path d="M0 3.5H7.2L3.6 0Z" fill="#3c3c3c"/></svg>
<div style="left:688.3px;top:613.5px;width:13.200000000000045px;height:12.8px;background:linear-gradient(to right,#fff,#f0f0f0);border-left:1px solid #c6c6c6;border-top:1px solid #c4c4c4;"></div>
<svg style="left:691.5999999999999px;top:618.1999999999999px;" width="7.2" height="3.5" viewBox="0 0 7.2 3.5"><path d="M0 0H7.2L3.6 3.5Z" fill="#3c3c3c"/></svg>
<div style="left:688.3px;top:330.3px;width:13.200000000000045px;height:283.3px;background:linear-gradient(to right,#fefefe,#ebebeb);border-left:1px solid #c6c6c6;border-top:1px solid #c4c4c4;border-bottom:1px solid #bcbcbc;"></div>
<div style="left:18px;top:626.3px;width:670.7px;height:13.0px;background:linear-gradient(#d4d4d4,#e4e4e4 30%,#e4e4e4);border-top:1px solid #c6c6c6;"></div>
<div style="left:18px;top:626.3px;width:13px;height:13.0px;background:linear-gradient(#fff,#f0f0f0);border-top:1px solid #c6c6c6;border-right:1px solid #c4c4c4;"></div>
<svg style="left:22.3px;top:629.4999999999999px;" width="3.5" height="7.2" viewBox="0 0 3.5 7.2"><path d="M3.5 0V7.2L0 3.6Z" fill="#3c3c3c"/></svg>
<div style="left:675.9000000000001px;top:626.3px;width:12.8px;height:13.0px;background:linear-gradient(#fff,#f0f0f0);border-top:1px solid #c6c6c6;border-left:1px solid #c4c4c4;"></div>
<svg style="left:680.8px;top:629.4999999999999px;" width="3.5" height="7.2" viewBox="0 0 3.5 7.2"><path d="M0 0V7.2L3.5 3.6Z" fill="#3c3c3c"/></svg>
<div style="left:30.7px;top:626.3px;width:364.5px;height:13.0px;background:linear-gradient(#fefefe,#e9e9e9);border-top:1px solid #c6c6c6;border-right:1px solid #bcbcbc;border-left:1px solid #c4c4c4;"></div>
<div style="left:688.7px;top:626.3px;width:12.8px;height:13px;background:#f0f0f0;border-left:1px solid #c6c6c6;border-top:1px solid #c6c6c6;"></div>
<div style="left:8.8px;top:649.5px;width:701.2px;height:1px;background:#c6c6c6;"></div>
<div style="left:8.8px;top:650px;width:85.5px;height:20.5px;background:linear-gradient(#e3e3e3,#e0e0e0);border:1px solid #c4c4c4;border-top:none;border-radius:0 0 3px 3px;"></div>
<span style="left:19.7px;top:652.79px;font-size:11.5px;color:#000;letter-spacing:-0.220px;transform:scaleX(0.9862);transform-origin:0 50%;">Tracking info</span>
<div style="left:93.3px;top:650px;width:71.3px;height:20.5px;background:linear-gradient(#e3e3e3,#e0e0e0);border:1px solid #c4c4c4;border-top:none;border-radius:0 0 3px 3px;"></div>
<span style="left:104.4px;top:652.79px;font-size:11.5px;color:#000;letter-spacing:-0.220px;transform:scaleX(0.9675);transform-origin:0 50%;">Help View</span>
<div style="left:163.6px;top:650px;width:78.70000000000002px;height:20.5px;background:linear-gradient(#e3e3e3,#e0e0e0);border:1px solid #c4c4c4;border-top:none;border-radius:0 0 3px 3px;"></div>
<span style="left:174.6px;top:652.79px;font-size:11.5px;color:#000;letter-spacing:-0.220px;transform:scaleX(0.9497);transform-origin:0 50%;">Graph View</span>
<div style="left:241.3px;top:649.5px;width:111.19999999999999px;height:23.5px;background:#fdfdfd;border:1px solid #c4c4c4;border-top:none;border-radius:0 0 2px 2px;"></div>
<span style="left:252.1px;top:654.09px;font-size:11.5px;color:#000;letter-spacing:-0.220px;transform:scaleX(0.9877);transform-origin:0 50%;">Module Properties</span>
<svg style="left:216.5px;top:288px;" width="13" height="19" viewBox="0 0 13 19"><path d="M1 1V15L4.3 12L6.8 17.5L8.9 16.6L6.5 11.2H10.8Z" fill="#fff" stroke="#000" stroke-width="1"/></svg>
<div style="left:321.2px;top:280.4px;width:306.8px;height:177.60000000000002px;background:#f0f0f0;border:1px solid #6e6e6e;box-shadow:0 1px 5px rgba(0,0,0,0.16);"></div>
<div style="left:322.2px;top:281.4px;width:304.8px;height:27px;background:#fff;"></div>
<svg style="left:329.6px;top:287.2px;" width="16" height="13" viewBox="0 0 16 13"><path d="M0.8 9.3C0.9 5.2 4 2.1 8.4 1.8C5.4 3.2 3.4 5.8 2.9 9.4Z" fill="#ea7a24"/><path d="M14.6 4C14.5 8.1 11.4 11.2 7 11.5C10 10.1 12 7.5 12.5 3.9Z" fill="#ea7a24"/><path d="M5.8 4.2H9.6L9.4 9.6H5.6Z" fill="#3583b8"/></svg>
<span style="left:349.2px;top:287.49px;font-size:11.5px;color:#000;letter-spacing:-0.220px;transform:scaleX(0.9863);transform-origin:0 50%;">Autopicking by BIN LMO Trend.</span>
<span style="left:561.4px;top:286.45px;font-size:13px;color:#000;transform:scaleX(0.8570);transform-origin:0 50%;">?</span>
<svg style="left:601px;top:289px;" width="10" height="10" viewBox="0 0 10 10"><path d="M0.5 0.5L9.5 9.5M9.5 0.5L0.5 9.5" stroke="#222" stroke-width="1.1"/></svg>
<span style="left:331.9px;top:319.29px;font-size:11.5px;color:#000;letter-spacing:-0.220px;transform:scaleX(0.9924);transform-origin:0 50%;">Choose an option</span>
<div style="left:332.5px;top:341px;width:284px;height:78.6px;background:#efefef;border:1px solid #dadada;border-radius:2px;"></div>
<div style="left:343px;top:367.8px;width:13px;height:13px;background:#fff;border:1px solid #9c9c9c;border-radius:50%;"></div>
<span style="left:362.2px;top:368.09px;font-size:11.5px;color:#000;letter-spacing:-0.220px;transform:scaleX(0.9294);transform-origin:0 50%;">Pick selected SRCs by selected area</span>
<div style="left:343px;top:392.5px;width:13px;height:13px;background:#fff;border:1px solid #8a8a8a;border-radius:50%;"></div>
<div style="left:346.6px;top:396.1px;width:5.8px;height:5.8px;background:#414141;border-radius:50%;"></div>
<span style="left:362.2px;top:392.89px;font-size:11.5px;color:#000;letter-spacing:-0.220px;transform:scaleX(0.9617);transform-origin:0 50%;">Pick all data</span>
<div style="left:464.5px;top:425.9px;width:73.5px;height:21px;background:linear-gradient(#f3f8fc,#e6f0f9);border:1px solid #4a9de3;border-radius:2.5px;box-shadow:inset 0 0 0 1px #cfe4f6;"></div>
<span style="left:493.9px;top:429.39px;font-size:11.5px;color:#000;letter-spacing:-0.220px;transform:scaleX(0.8717);transform-origin:0 50%;">OK</span>
<div style="left:543.4px;top:425.9px;width:72.9px;height:21px;background:linear-gradient(#f7f7f7,#ececec);border:1px solid #acacac;border-radius:2.5px;"></div>
<span style="left:563.5px;top:429.39px;font-size:11.5px;color:#000;letter-spacing:-0.220px;transform:scaleX(0.9449);transform-origin:0 50%;">Cancel</span>
<div style="left:439px;top:19px;width:105px;height:33px;border:4px solid #06b050;border-radius:6px;background:rgba(112,173,71,0.20);"></div>
<div style="left:313px;top:272px;width:322px;height:198px;border:4px solid #06b050;border-radius:14px;background:rgba(112,173,71,0.20);"></div>
<svg style="left:480px;top:48px;" width="40" height="230" viewBox="0 0 40 230"><path d="M6.2 4L24.6 218" stroke="#06b050" stroke-width="2" fill="none"/><path d="M25.3 224L18.3 214.2L24.8 216.8L30.5 213.3Z" fill="#06b050"/></svg>
</div></body></html>
